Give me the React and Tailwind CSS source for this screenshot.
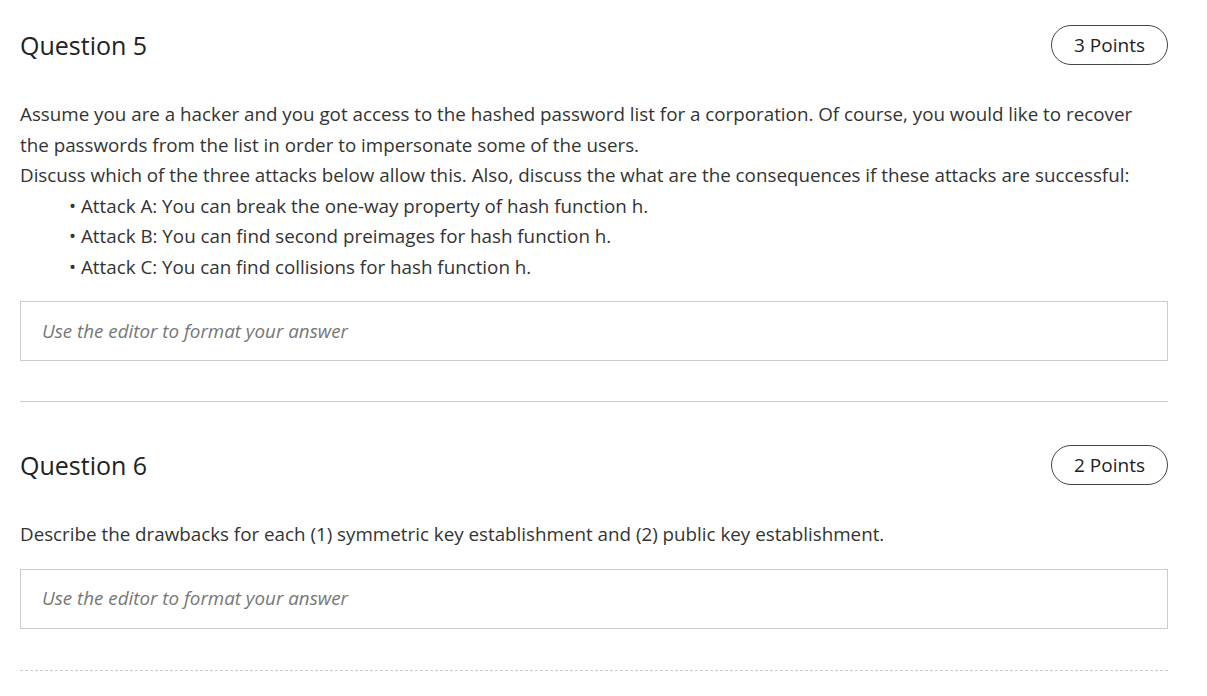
export default function App() {
  return (
    <div className="bg-white min-h-screen px-5 pt-[25px] text-[#333]" style={{ fontFamily: '"Open Sans", sans-serif' }}>
      <div className="w-[1148px]">
        {/* Question 5 */}
        <div className="flex items-center justify-between">
          <h2 className="mt-[2px] text-[25px] font-normal text-[#222]">Question 5</h2>
          <span className="h-10 w-[117px] rounded-full border border-[#444] flex items-center justify-center text-[19px] text-[#222]">3 Points</span>
        </div>
        <div className="mt-[34px] max-w-[1136px] text-[18.8px] leading-[30.5px]">
          <p>Assume you are a hacker and you got access to the hashed password list for a corporation. Of course, you would like to recover the passwords from the list in order to impersonate some of the users.</p>
          <p>Discuss which of the three attacks below allow this. Also, discuss the what are the consequences if these attacks are successful:</p>
          <ul className="pl-[49px]">
            <li>• Attack A: You can break the one-way property of hash function h.</li>
            <li>• Attack B: You can find second preimages for hash function h.</li>
            <li>• Attack C: You can find collisions for hash function h.</li>
          </ul>
        </div>
        <div className="mt-[19px] h-[60px] border border-[#ccc] flex items-center px-[21px] text-[18.8px] italic text-[#777]">
          Use the editor to format your answer
        </div>
        <div className="mt-10 border-t border-[#ccc]" />

        {/* Question 6 */}
        <div className="mt-[43px] flex items-center justify-between">
          <h2 className="mt-[2px] text-[25px] font-normal text-[#222]">Question 6</h2>
          <span className="h-10 w-[117px] rounded-full border border-[#444] flex items-center justify-center text-[19px] text-[#222]">2 Points</span>
        </div>
        <p className="mt-[34px] text-[18.8px] leading-[30.5px]">
          Describe the drawbacks for each (1) symmetric key establishment and (2) public key establishment.
        </p>
        <div className="mt-[19px] h-[60px] border border-[#ccc] flex items-center px-[21px] text-[18.8px] italic text-[#777]">
          Use the editor to format your answer
        </div>
        <div className="mt-[41px] border-t border-dashed border-[#ccc]" />
      </div>
    </div>
  );
}
